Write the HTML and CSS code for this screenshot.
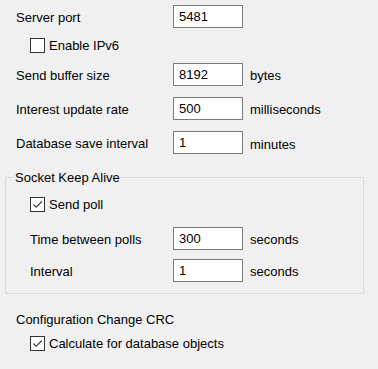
FILE: index.html
```html
<!DOCTYPE html>
<html>
<head>
<meta charset="utf-8">
<link rel="stylesheet" href="styles.css">
</head>
<body>
<div class="page">
  <div class="row row-first">
    <span class="label">Server port</span>
    <span class="input">5481</span>
  </div>
  <div class="check-row check-ipv6">
    <span class="box"></span>
    <span class="check-label">Enable IPv6</span>
  </div>
  <div class="row row-gap10">
    <span class="label">Send buffer size</span>
    <span class="input">8192</span>
    <span class="unit">bytes</span>
  </div>
  <div class="row row-gap11">
    <span class="label">Interest update rate</span>
    <span class="input">500</span>
    <span class="unit">milliseconds</span>
  </div>
  <div class="row row-gap11">
    <span class="label">Database save interval</span>
    <span class="input">1</span>
    <span class="unit unit-low">minutes</span>
  </div>

  <fieldset class="group">
    <legend class="legend">Socket Keep Alive</legend>
    <div class="check-row check-poll">
      <span class="box checked"><svg viewBox="0 0 13 13" width="13" height="13"><polyline points="2.5,6.5 5.2,9.3 10.8,3.5" fill="none" stroke="#333" stroke-width="1.1"/></svg></span>
      <span class="check-label">Send poll</span>
    </div>
    <div class="row row-gap15 row-inner">
      <span class="label label-inner">Time between polls</span>
      <span class="input">300</span>
      <span class="unit">seconds</span>
    </div>
    <div class="row row-gap9 row-inner">
      <span class="label label-inner">Interval</span>
      <span class="input">1</span>
      <span class="unit">seconds</span>
    </div>
  </fieldset>

  <div class="section-title">Configuration Change CRC</div>
  <div class="check-row check-crc">
    <span class="box checked"><svg viewBox="0 0 13 13" width="13" height="13"><polyline points="2.5,6.5 5.2,9.3 10.8,3.5" fill="none" stroke="#333" stroke-width="1.1"/></svg></span>
    <span class="check-label">Calculate for database objects</span>
  </div>
</div>
</body>
</html>
```

FILE: styles.css
```css
html, body {
  margin: 0;
  padding: 0;
  background: #f0f0f0;
}

body {
  font-family: "Liberation Sans", Arial, sans-serif;
  font-size: 13px;
  line-height: 15px;
  color: #000;
  width: 378px;
  height: 369px;
  overflow: hidden;
}

.page {
  display: flex;
  flex-direction: column;
  padding-top: 5px;
}

.row {
  display: flex;
  align-items: center;
  height: 23px;
  padding-left: 16px;
}

.row-gap10 { margin-top: 10px; }
.row-gap11 { margin-top: 11px; }
.row-gap15 { margin-top: 15px; }
.row-gap9 { margin-top: 9px; }

.label {
  width: 157px;
  flex: none;
  padding-top: 1px;
}

.row-inner {
  padding-left: 24px;
}

.label-inner {
  width: 143px;
}

.input {
  box-sizing: border-box;
  width: 70px;
  height: 23px;
  flex: none;
  background: #fff;
  border: 1px solid #7a7a7a;
  padding-left: 5px;
  display: flex;
  align-items: center;
}

.unit {
  margin-left: 7px;
  padding-top: 1px;
}

.unit-low {
  padding-top: 4px;
}

.check-row {
  display: flex;
  align-items: center;
  height: 15px;
  padding-left: 30px;
}

.check-ipv6 { margin-top: 10px; }
.check-poll { margin-top: 12px; padding-left: 24px; }
.check-crc { margin-top: 9px; }

.box {
  box-sizing: border-box;
  width: 15px;
  height: 15px;
  flex: none;
  border: 1px solid #333;
  background: #fff;
  display: flex;
  align-items: center;
  justify-content: center;
}

.box svg {
  display: block;
}

.check-label {
  margin-left: 4px;
}

.group {
  box-sizing: border-box;
  width: 359px;
  margin: 16px 0 0 5px;
  padding: 0 0 11px 0;
  border: 1px solid #dcdcdc;
  min-width: 0;
}

.legend {
  margin-left: 8px;
  padding: 0 1px;
  line-height: 15px;
}

.section-title {
  margin-top: 18px;
  padding-left: 16px;
}
```
